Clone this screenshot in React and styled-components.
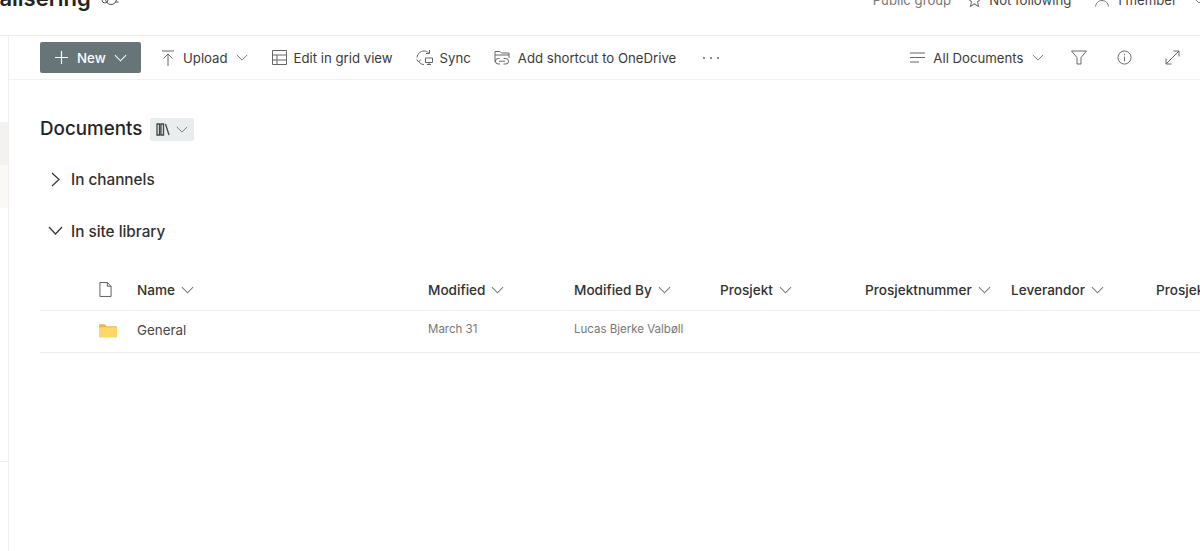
import React from "react";
import styled, { createGlobalStyle } from "styled-components";

const GlobalStyle = createGlobalStyle`
  html, body {
    margin: 0;
    padding: 0;
    background: #fff;
    overflow: hidden;
  }
  body {
    font-family: Inter, "Liberation Sans", sans-serif;
    color: #323130;
  }
`;

const Page = styled.div`
  width: 1200px;
  height: 551px;
  display: flex;
  flex-direction: column;
  overflow: hidden;
`;

const Header = styled.header`
  height: 35px;
  flex: none;
  display: flex;
  justify-content: space-between;
  border-bottom: 1px solid #eaeaea;
  overflow: hidden;
`;

const TitleGroup = styled.div`
  display: flex;
  align-items: flex-start;
  gap: 10px;
  margin-top: -15px;
  margin-left: -14px;
`;

const Title = styled.span`
  font-size: 22px;
  line-height: 26px;
  font-weight: 600;
  color: #252423;
`;

const HeaderMeta = styled.div`
  display: flex;
  align-items: center;
  height: 16px;
  margin-top: -8px;
  margin-right: -5px;
  font-size: 13.2px;
  line-height: 16px;
`;

const MetaItem = styled.span`
  display: flex;
  align-items: center;
  gap: 7px;
  margin-left: ${(p) => p.$gap || 0}px;
  color: ${(p) => (p.$muted ? "#777" : "#444")};
`;

const Body = styled.div`
  flex: 1;
  display: flex;
  min-height: 0;
`;

const Rail = styled.aside`
  width: 8px;
  flex: none;
  border-right: 1px solid #eeeeee;
  display: flex;
  flex-direction: column;
  padding-top: 86px;
`;

const RailBand = styled.div`
  height: ${(p) => p.$h}px;
  flex: none;
  background: ${(p) => p.$bg || "transparent"};
  border-bottom: ${(p) => (p.$line ? "1px solid #eeeeee" : "none")};
`;

const Main = styled.main`
  flex: 1;
  min-width: 0;
  display: flex;
  flex-direction: column;
`;

const Toolbar = styled.div`
  height: 43px;
  flex: none;
  display: flex;
  align-items: center;
  justify-content: space-between;
  border-bottom: 1px solid #f4f0f0;
  padding-left: 31px;
  padding-right: 20px;
`;

const ToolGroup = styled.div`
  display: flex;
  align-items: center;
`;

const NewButton = styled.button`
  width: 101px;
  height: 31px;
  display: flex;
  align-items: center;
  gap: 8px;
  padding: 0 0 0 14px;
  margin-right: 20px;
  border: 0;
  border-radius: 2px;
  background: #677578;
  color: #fff;
  font: 500 13.3px Inter, "Liberation Sans", sans-serif;
`;

const ToolItem = styled.span`
  display: flex;
  align-items: center;
  gap: ${(p) => p.$iconGap || 7}px;
  margin-right: ${(p) => p.$after || 0}px;
  font-size: 13.2px;
  line-height: 18px;
  color: #3b3a39;
  white-space: nowrap;
`;

const Dots = styled.span`
  display: flex;
  gap: 5px;
  margin-left: 27px;
  i {
    width: 2px;
    height: 2px;
    border-radius: 50%;
    background: #666;
  }
`;

const Content = styled.div`
  padding: 0 0 0 31px;
`;

const DocTitleRow = styled.div`
  display: flex;
  align-items: center;
  gap: 8px;
  margin-top: 37px;
  height: 24px;
`;

const DocTitle = styled.h1`
  margin: 0;
  font-size: 18.8px;
  line-height: 24px;
  font-weight: 500;
  color: #252423;
`;

const ViewSwitch = styled.span`
  width: 44px;
  height: 23px;
  display: flex;
  align-items: center;
  justify-content: center;
  gap: 5px;
  border-radius: 2px;
  background: #e9eded;
`;

const Section = styled.div`
  display: flex;
  align-items: center;
  gap: ${(p) => p.$gap}px;
  height: 20px;
  margin-top: ${(p) => p.$top}px;
  padding-left: ${(p) => p.$pad}px;
  font-size: 15.3px;
  font-weight: 500;
  color: #323130;
`;

const Grid = styled.div`
  margin-top: 28px;
`;

const Row = styled.div`
  display: grid;
  grid-template-columns: 58px 39px 291px 146px 146px 145px 146px 145px 100px;
  align-items: center;
  height: ${(p) => p.$h}px;
  padding-bottom: ${(p) => p.$pb || 0}px;
  box-sizing: border-box;
  border-bottom: 1px solid ${(p) => p.$line};
  overflow: hidden;
  white-space: nowrap;
`;

const HeaderCell = styled.span`
  display: flex;
  align-items: center;
  gap: 6px;
  font-size: 13.6px;
  font-weight: 500;
  color: #323130;
`;

const IconCell = styled.span`
  display: flex;
  align-items: center;
  grid-column: 2;
  padding-left: 1px;
`;

const NameCell = styled.span`
  font-size: 13.4px;
  color: #484644;
`;

const SmallCell = styled.span`
  font-size: 11.5px;
  margin-bottom: 2px;
  color: #777;
`;

const Chevron = ({ size = 13, color = "#777" }) => (
  <svg width={size} height={Math.round(size * 0.6)} viewBox="0 0 14 8" fill="none" stroke={color} strokeWidth="1.1">
    <path d="M1 1l6 6 6-6" />
  </svg>
);

const Stroke = ({ w = 18, h = 18, vb = "0 0 18 18", color = "#666", children }) => (
  <svg width={w} height={h} viewBox={vb} fill="none" stroke={color} strokeWidth="1">
    {children}
  </svg>
);

const columns = ["Name", "Modified", "Modified By", "Prosjekt", "Prosjektnummer", "Leverandor", "Prosjektleder"];

export default function App() {
  return (
    <Page>
      <GlobalStyle />
      <Header>
        <TitleGroup>
          <Title>ualisering</Title>
          <Stroke w={18} h={22} vb="0 0 18 22" color="#555">
            <circle cx="10" cy="14" r="5.500" />
            <circle cx="4" cy="15" r="3" />
            <path d="M14 17h3.500" />
          </Stroke>
        </TitleGroup>
        <HeaderMeta>
          <MetaItem $muted>Public group</MetaItem>
          <MetaItem $gap={16}>
            <Stroke w={15} h={15} vb="0 0 14 14" color="#777">
              <path d="M7 1l1.800 4 4.200.4-3.200 2.800 1 4.300L7 10.200 3.200 12.500l1-4.300L1 5.400 5.200 5z" />
            </Stroke>
            Not following
          </MetaItem>
          <MetaItem $gap={24}>
            <Stroke w={14} h={14} vb="0 0 14 14" color="#777">
              <circle cx="7" cy="3" r="3" />
              <path d="M.5 13.500c.5-3.500 3-6 6.500-6s6 2.500 6.500 6" />
            </Stroke>
            1 member
          </MetaItem>
          <MetaItem $gap={16}>
            <Chevron size={12} />
          </MetaItem>
        </HeaderMeta>
      </Header>
      <Body>
        <Rail>
          <RailBand $h={43} $bg="#f3f2f1" />
          <RailBand $h={43} $bg="#faf9f6" />
          <RailBand $h={253} $line />
        </Rail>
        <Main>
          <Toolbar>
            <ToolGroup>
              <NewButton>
                <Stroke w={15} h={15} vb="0 0 15 15" color="#fff">
                  <path d="M7.500 1v13M1 7.500h13" strokeWidth="1.200" />
                </Stroke>
                New
                <Chevron size={13} color="#fff" />
              </NewButton>
              <ToolItem $after={23} $iconGap={8}>
                <Stroke w={14} h={18} vb="0 0 14 18">
                  <path d="M1 2h12M7 17V5M2.500 9.500L7 5l4.500 4.500" />
                </Stroke>
                Upload
                <Chevron size={12} />
              </ToolItem>
              <ToolItem $after={23} $iconGap={6}>
                <Stroke w={17} h={17} vb="0 0 17 17">
                  <path d="M1.500 1.500h14v14h-14zM1.500 6h14M1.500 11h14M6 6v9.500" />
                </Stroke>
                Edit in grid view
              </ToolItem>
              <ToolItem $after={23}>
                <Stroke w={17} h={17} vb="0 0 17 17">
                  <path d="M1 8.500C1.500 4.500 4.500 2 8 2c2 0 3.500.7 4.800 2M13.500 1v3.500H10M.7 10.500L2.700 13l2-2.500M2.700 12.500C4 14.500 5.500 15.500 8 15.500" />
                  <path d="M9.500 9h7v4.500h-7zM13 13.500v2M11 15.500h4" />
                </Stroke>
                Sync
              </ToolItem>
              <ToolItem $iconGap={8}>
                <Stroke w={16} h={17} vb="0 0 16 17">
                  <path d="M1 13V2.500h5l1.500 1.500H15v5M1 6h14" />
                  <path d="M5.500 9.500H4.200a2.700 2.700 0 000 5.500h1.800M9.500 9.500h2.300a2.700 2.700 0 010 5.500H9.500M5 12.200h6" />
                </Stroke>
                Add shortcut to OneDrive
              </ToolItem>
              <Dots><i /><i /><i /></Dots>
            </ToolGroup>
            <ToolGroup>
              <ToolItem $after={27} $iconGap={8.5}>
                <Stroke w={15} h={12} vb="0 0 15 12">
                  <path d="M0 1h15M0 5.500h15M0 10h9" />
                </Stroke>
                All Documents
                <Chevron size={12} />
              </ToolItem>
              <ToolItem $after={30}>
                <Stroke w={16} h={15} vb="0 0 16 15">
                  <path d="M.5 1h15L10 7.500V14H6V7.500z" />
                </Stroke>
              </ToolItem>
              <ToolItem $after={33}>
                <Stroke w={15} h={15} vb="0 0 16 16">
                  <circle cx="8" cy="8" r="7" />
                  <path d="M8 7v5M8 4v1.500" />
                </Stroke>
              </ToolItem>
              <ToolItem>
                <Stroke w={15} h={15} vb="0 0 15 15">
                  <path d="M1 14L14 1M8.500 1H14v5.500M1 8.500V14h5.500" />
                </Stroke>
              </ToolItem>
            </ToolGroup>
          </Toolbar>
          <Content>
            <DocTitleRow>
              <DocTitle>Documents</DocTitle>
              <ViewSwitch>
                <Stroke w={15} h={13} vb="0 0 15 13" color="#444">
                  <path d="M1 1h2.500v11H1zM5 1h2.500v11H5zM9.500 1L13 12" strokeWidth="1.300" />
                </Stroke>
                <Chevron size={12} />
              </ViewSwitch>
            </DocTitleRow>
            <Section $top={28} $pad={10} $gap={10}>
              <Stroke w={11} h={15} vb="0 0 11 15" color="#333">
                <path d="M2 1l7 6.500L2 14" strokeWidth="1.200" />
              </Stroke>
              <span>In channels</span>
            </Section>
            <Section $top={32} $pad={8} $gap={8}>
              <Stroke w={15} h={10} vb="0 0 15 10" color="#333">
                <path d="M1 1l6.500 7L14 1" strokeWidth="1.200" />
              </Stroke>
              <span>In site library</span>
            </Section>
            <Grid>
              <Row $h={42} $line="#f1efed">
                <IconCell>
                  <Stroke w={13} h={17} vb="0 0 14 17" color="#555">
                    <path d="M1 1h8l4 4v11H1zM9 1v4h4" />
                  </Stroke>
                </IconCell>
                {columns.map((name) => (
                  <HeaderCell key={name}>
                    {name}
                    <Chevron size={13} />
                  </HeaderCell>
                ))}
              </Row>
              <Row $h={42} $pb={3} $line="#ececec">
                <IconCell>
                  <svg width="18" height="15" viewBox="0 0 19 15">
                    <path d="M0 2a1 1 0 011-1h5l2 2h10a1 1 0 011 1v10H0z" fill="#e8b93e" />
                    <path d="M0 4h19v10a1 1 0 01-1 1H1a1 1 0 01-1-1z" fill="#ffd766" />
                  </svg>
                </IconCell>
                <NameCell>General</NameCell>
                <SmallCell>March 31</SmallCell>
                <SmallCell>Lucas Bjerke Valbøll</SmallCell>
              </Row>
            </Grid>
          </Content>
        </Main>
      </Body>
    </Page>
  );
}
